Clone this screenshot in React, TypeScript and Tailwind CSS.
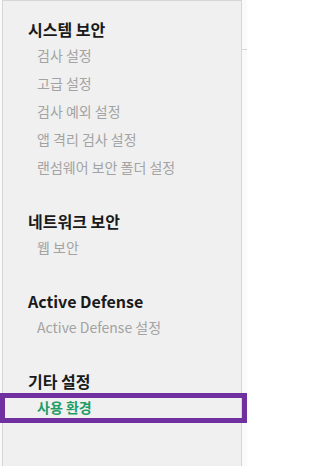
import React from "react";

const groups = [
  { title: "시스템 보안", items: ["검사 설정", "고급 설정", "검사 예외 설정", "앱 격리 검사 설정", "랜섬웨어 보안 폴더 설정"] },
  { title: "네트워크 보안", items: ["웹 보안"] },
  { title: "Active Defense", items: ["Active Defense 설정"] },
  { title: "기타 설정", items: ["사용 환경"], active: "사용 환경" },
];

export default function App() {
  return (
    <div
      className="relative flex w-[247px] h-[466px] bg-[#fafafa] overflow-hidden"
      style={{ fontFamily: '"Noto Sans CJK KR", "Noto Sans", sans-serif' }}
    >
      <div className="ml-[2px] w-[240px] h-full bg-[#f0f0f0] border-l border-r border-t border-[#d6d6d6] pt-[16px] pl-[25px] flex flex-col gap-[28px]">
        {groups.map((g) => (
          <div key={g.title} className="flex flex-col">
            <div className="h-[24px] flex items-center text-[16px] font-bold text-[#1a1a1a] leading-none">
              {g.title}
            </div>
            {g.items.map((it) => (
              <div
                key={it}
                className={
                  it === g.active
                    ? "h-[28px] flex items-center pl-[9px] text-[14px] font-bold text-[#1f9d66] leading-none"
                    : "h-[28px] flex items-center pl-[9px] text-[14px] text-[#a3a3a3] leading-none"
                }
              >
                {it}
              </div>
            ))}
          </div>
        ))}
      </div>
      <div className="relative flex-1 h-full">
        <div className="absolute top-[49px] left-0 w-full h-px bg-[#d6d6d6]" />
      </div>
      <div className="absolute left-0 top-[393px] w-[247px] h-[30px] border-[5px] border-[#7030a0]" />
    </div>
  );
}
